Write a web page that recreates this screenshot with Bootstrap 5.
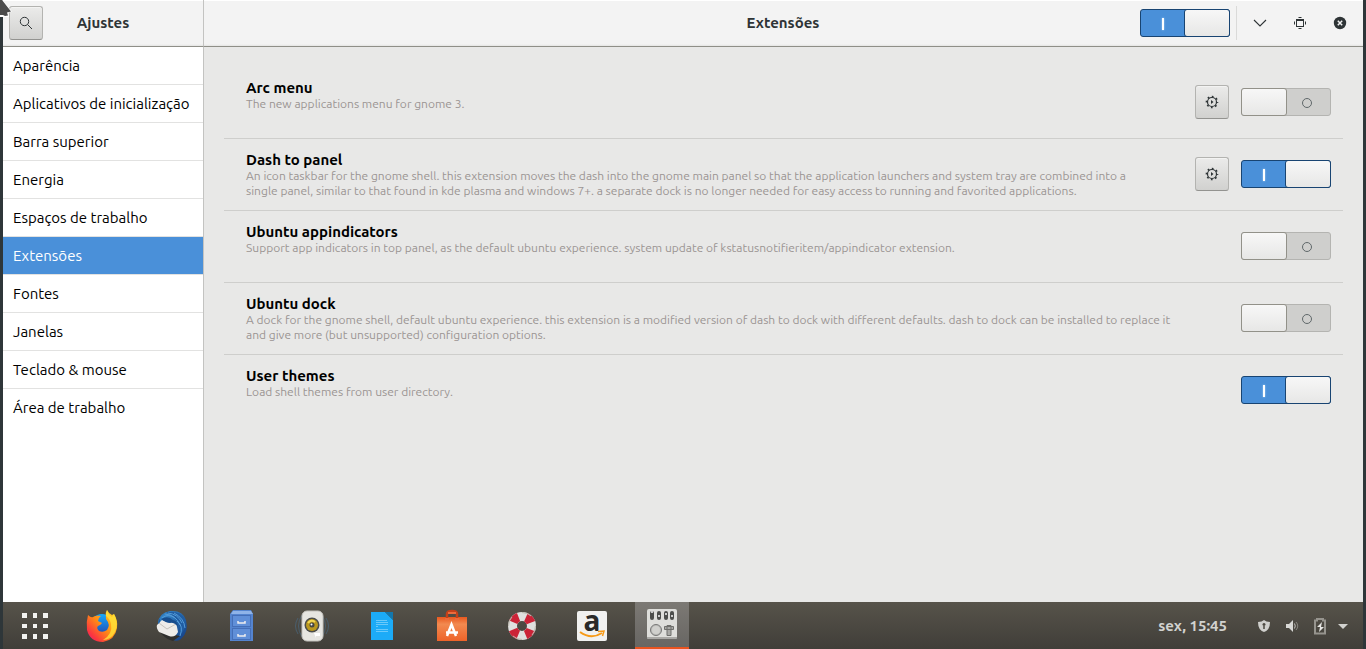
<!DOCTYPE html>
<html lang="pt-BR">
<head>
<meta charset="utf-8">
<meta name="viewport" content="width=device-width, initial-scale=1">
<title>Ajustes</title>
<link href="https://cdn.jsdelivr.net/npm/bootstrap@5.3.0/dist/css/bootstrap.min.css" rel="stylesheet">
<style>
body { font-family: Ubuntu, "Noto Sans", sans-serif; font-size: 15px; line-height: 18px; color: #000; background: #2e3639; }
.app-window { padding: 0 3px; }
.side-width { width: 201px; flex: none; border-right: 1px solid #c3c3c1; }
.title-bar { height: 47px; background: linear-gradient(#fff 1px, #f3f3f3 1px, #f3f3f3 44px, #e4e4e3); border-bottom: 1px solid #8f8f88; color: #2e3436; }
.title-bar.side-width { padding-left: 6px; }
.title-bar h1, .title-bar h2 { font-size: 15px; line-height: 18px; font-weight: 700; margin: 0; }
.title-bar h1 { padding-right: 40px; }
.title-bar h2 { padding-left: 222px; }
.tool-btn { width: 34px; height: 34px; padding: 0; border: 1px solid #b3b3b0; border-bottom-color: #939390; border-radius: 3px; background: linear-gradient(#ebebea, #d1d1cf); color: #2e3436; display: grid; place-items: center; box-shadow: inset 0 1px #f3f3f2; }
.win-btns { gap: 16px; padding: 0 11px; }
.win-btn { width: 24px; height: 34px; padding: 0; border: 0; background: none; color: #2e3436; display: grid; place-items: center; }
.head-sep { width: 1px; height: 34px; background: #dadad9; margin-left: 6px; }
.side-list { background: #fff; }
.side-list .list-group-item { height: 38px; padding: 9px 0 9px 10px; border: 0; border-bottom: 1px solid #e2e2e1; border-radius: 0; color: #000; background: #fff; white-space: nowrap; line-height: 19px; }
.side-list .list-group-item:last-child { border-bottom-color: #fff; }
.side-list .list-group-item.active { background: #4a90d9; color: #fff; margin: 0; border-color: #e2e2e1; }
.page-area { background: #e8e8e7; padding: 20px; }
.ext-row { height: 72px; padding: 12px 12px 0 22px; border-bottom: 1px solid #cececc; }
.ext-row:last-child { border-bottom: 0; }
.ext-row h3 { font-size: 15px; line-height: 17px; font-weight: 700; margin: 0; }
.ext-row p { font-size: 12px; line-height: 15px; color: #9b9593; margin: 0; white-space: nowrap; }
.ext-tools { height: 46px; gap: 12px; }
.toggle { appearance: none; position: relative; width: 90px; height: 28px; margin: 0; border: 1px solid #b4b4b1; border-radius: 3px; background: #cfcfcd; flex: none; display: block; }
.toggle::before { content: ""; position: absolute; left: -1px; top: -1px; width: 46px; height: 28px; border: 1px solid #929189; border-radius: 3px; background: linear-gradient(#f7f7f7, #e7e7e6); }
.toggle::after { content: ""; position: absolute; right: 18px; top: 9px; width: 10px; height: 10px; border: 1px solid #60686a; border-radius: 50%; }
.toggle:checked { border-color: #184472; background: #4a90d9; }
.toggle:checked::before { left: 43px; border-color: #184472; }
.toggle:checked::after { left: 21px; right: auto; top: 8px; width: 2px; height: 12px; border: 0; border-radius: 0; background: #fff; box-shadow: 0 0 2px #b8d8f8; }
.dock { height: 47px; background: linear-gradient(#57534a, #403e39); color: #d2d2cf; }
.dock button { border: 0; background: none; padding: 0; display: grid; place-items: center; height: 47px; color: inherit; }
.apps-btn { width: 64px; }
.dock .task-btn { width: 54px; }
.dock .task-btn.current { background: linear-gradient(#7c7974, #686663); border-bottom: 2px solid #e95420; }
.clock { font-size: 15px; font-weight: 700; }
.dock .tray { gap: 12px; padding: 0 15px 0 29px; }
.corner-pointer { position: absolute; left: 0; top: 0; z-index: 2; }
svg { display: block; overflow: visible; }
</style>
<script src="https://cdn.jsdelivr.net/npm/bootstrap@5.3.0/dist/js/bootstrap.bundle.min.js"></script>
</head>
<body>
<div class="app-window d-flex flex-column min-vh-100">
  <svg class="corner-pointer" width="12" height="20" aria-hidden="true"><path d="M0 -3L12 11.500L8 13L9 17H0Z" fill="#fff"/><path d="M0 -1L2 0L11 11.500L7 12.500L8 15.500L5 16L3 15H0Z" fill="#4b4b4b"/></svg>

  <header class="d-flex">
    <div class="title-bar side-width d-flex align-items-center">
      <button class="tool-btn" type="button" aria-label="Pesquisar">
        <svg width="16" height="16" fill="none" stroke="#2e3436"><circle cx="6.500" cy="6.500" r="4.200"/><path d="M9.500 9.500L14 14"/></svg>
      </button>
      <h1 class="flex-grow-1 text-center">Ajustes</h1>
    </div>
    <div class="title-bar flex-grow-1 d-flex align-items-center">
      <h2 class="flex-grow-1 text-center" id="page-title">Extensões</h2>
      <input class="toggle" type="checkbox" role="switch" checked aria-labelledby="page-title">
      <span class="head-sep"></span>
      <div class="win-btns d-flex">
        <button class="win-btn" type="button" aria-label="Minimizar"><svg width="14" height="14" fill="none" stroke="#2e3436" stroke-width="1.100"><path d="M1 4L7 10L13 4"/></svg></button>
        <button class="win-btn" type="button" aria-label="Maximizar"><svg width="14" height="14" fill="#2e3436"><path d="M3 3h8v8H3zM4 5v5h6v-5z" fill-rule="evenodd"/><path d="M5 2h4L8 1H6zM5 12h4L8 13H6zM2 5v4L1 8V6zM12 5v4L13 8V6z"/></svg></button>
        <button class="win-btn" type="button" aria-label="Fechar"><svg width="14" height="14"><circle cx="7" cy="7" r="6.200" fill="#2e3436"/><path d="M4.800 4.800l4.400 4.400m0-4.400l-4.400 4.400" stroke="#f3f3f3" stroke-width="1.500"/></svg></button>
      </div>
    </div>
  </header>

  <div class="d-flex flex-grow-1">
    <nav class="side-list side-width" aria-label="Seções">
      <div class="list-group">
        <a class="list-group-item" href="#">Aparência</a>
        <a class="list-group-item" href="#">Aplicativos de inicialização</a>
        <a class="list-group-item" href="#">Barra superior</a>
        <a class="list-group-item" href="#">Energia</a>
        <a class="list-group-item" href="#">Espaços de trabalho</a>
        <a class="list-group-item active" href="#" aria-current="page">Extensões</a>
        <a class="list-group-item" href="#">Fontes</a>
        <a class="list-group-item" href="#">Janelas</a>
        <a class="list-group-item" href="#">Teclado &amp; mouse</a>
        <a class="list-group-item" href="#">Área de trabalho</a>
      </div>
    </nav>
    <main class="page-area flex-grow-1">
      <section class="ext-row d-flex justify-content-between">
        <div><h3 id="e1">Arc menu</h3><p>The new applications menu for gnome 3.</p></div>
        <div class="ext-tools d-flex align-items-center">
          <button class="tool-btn" type="button" aria-label="Configurar Arc menu"><svg width="14" height="14"><use href="#gear"/></svg></button>
          <input class="toggle" type="checkbox" role="switch" aria-labelledby="e1">
        </div>
      </section>
      <section class="ext-row d-flex justify-content-between">
        <div><h3 id="e2">Dash to panel</h3><p>An icon taskbar for the gnome shell. this extension moves the dash into the gnome main panel so that the application launchers and system tray are combined into a<br>single panel, similar to that found in kde plasma and windows 7+. a separate dock is no longer needed for easy access to running and favorited applications.</p></div>
        <div class="ext-tools d-flex align-items-center">
          <button class="tool-btn" type="button" aria-label="Configurar Dash to panel"><svg width="14" height="14"><use href="#gear"/></svg></button>
          <input class="toggle" type="checkbox" role="switch" checked aria-labelledby="e2">
        </div>
      </section>
      <section class="ext-row d-flex justify-content-between">
        <div><h3 id="e3">Ubuntu appindicators</h3><p>Support app indicators in top panel, as the default ubuntu experience. system update of kstatusnotifieritem/appindicator extension.</p></div>
        <div class="ext-tools d-flex align-items-center"><input class="toggle" type="checkbox" role="switch" aria-labelledby="e3"></div>
      </section>
      <section class="ext-row d-flex justify-content-between">
        <div><h3 id="e4">Ubuntu dock</h3><p>A dock for the gnome shell, default ubuntu experience. this extension is a modified version of dash to dock with different defaults. dash to dock can be installed to replace it<br>and give more (but unsupported) configuration options.</p></div>
        <div class="ext-tools d-flex align-items-center"><input class="toggle" type="checkbox" role="switch" aria-labelledby="e4"></div>
      </section>
      <section class="ext-row d-flex justify-content-between">
        <div><h3 id="e5">User themes</h3><p>Load shell themes from user directory.</p></div>
        <div class="ext-tools d-flex align-items-center"><input class="toggle" type="checkbox" role="switch" checked aria-labelledby="e5"></div>
      </section>
    </main>
  </div>

  <footer class="dock d-flex align-items-center">
    <button class="apps-btn" type="button" aria-label="Mostrar aplicativos"><svg width="26" height="26" fill="#f2f2f0"><path d="M0 0h5v5H0zM11 0h4v5h-4zM21 0h5v5h-5zM0 11h5v4H0zM11 11h4v4h-4zM21 11h5v4h-5zM0 21h5v5H0zM11 21h4v5h-4zM21 21h5v5h-5z"/></svg></button>
    <div class="d-flex gap-3 ms-2">
      <button class="task-btn" type="button" aria-label="Firefox"><svg width="32" height="32"><circle cx="16" cy="16" r="12" fill="url(#ffb)"/><path d="M2 5Q5 8 7 7Q10 5 15 6Q12 8 12 11L16 13Q15 15 12 16Q10 18 13 21Q17 23 21 20Q25 15 20 9Q19 4 21 0Q23 4 26 5L28 4Q32 10 31 18Q29 30 17 32Q4 32 1 20Q0 12 2 5Z" fill="url(#fff1)"/><path d="M21 0Q22 4 26 7L28 4Q33 14 29 22Q25 30 17 30Q27 24 25 14Q24 9 20 6Q19 3 21 0Z" fill="#ffe13a" opacity=".8"/></svg></button>
      <button class="task-btn" type="button" aria-label="Thunderbird"><svg width="32" height="32"><path d="M2 13Q3 3 14 1Q27 0 30 10Q33 22 25 29Q22 32 17 30Q5 27 2 13Z" fill="url(#tb)"/><path d="M4 22L24 26L17 31Q9 29 4 22Z" fill="#302f2d"/><path d="M1 15L6 10Q12 13 20 12L22 22Q19 28 13 26L3 22Q0 18 1 15Z" fill="#eeece9"/><path d="M3 13L11 19L20 14" fill="none" stroke="#c6c2bc"/><path d="M4 12Q3 4 11 3Q18 5 21 11Q26 16 23 25Q31 20 29 9Q23 0 12 2Q3 5 2 14Z" fill="#205da3"/><path d="M6 8Q12 3 19 8M12 3Q22 4 26 13M18 3Q28 8 29 18M21 11Q28 16 24 26M9 4Q20 5 24 15" fill="none" stroke="#549bd7"/><path d="M5 9Q12 5 17 10Q22 11 22 17Q18 12 14 13Q10 13 5 9Z" fill="#184d8d"/></svg></button>
      <button class="task-btn" type="button" aria-label="Arquivos"><svg width="26" height="32"><path d="M4 0H22L24 4V31H1V4Z" fill="#5484cf"/><path d="M4 1H22L24 4H2Z" fill="#8fb3e8"/><rect x="3.500" y="5.500" width="18" height="11" fill="#608fd8" stroke="#456fb8"/><rect x="3.500" y="18.500" width="18" height="11" fill="#608fd8" stroke="#456fb8"/><path d="M9 11v2h7v-2M9 24v2h7v-2" fill="none" stroke="#eee" stroke-width="1.500"/></svg></button>
      <button class="task-btn" type="button" aria-label="Rhythmbox"><svg width="36" height="32"><path d="M4 8Q-1 16 4 24M8 5Q1 16 8 27M32 8Q37 16 32 24M28 5Q35 16 28 27" fill="none" stroke="#496c88" opacity=".6"/><rect x="8" y="1" width="21" height="30" rx="5" fill="#e6e5e1" stroke="#c4c2bd"/><circle cx="18" cy="15" r="7.500" fill="#4c4d4b"/><circle cx="18" cy="15" r="6" fill="#b9971e"/><path d="M14 13Q17 9 21 12" stroke="#f1d654" stroke-width="2" fill="none"/><circle cx="18" cy="15" r="2.500" fill="#454643"/><circle cx="17.500" cy="14.500" r="1" fill="#fff"/><path d="M20 23h6v3h-4v2" fill="#fff"/></svg></button>
      <button class="task-btn" type="button" aria-label="LibreOffice Writer"><svg width="24" height="30"><path d="M1 1H15L23 9V29H1Z" fill="#1cabf7"/><path d="M15 1H23V9Z" fill="#1277ad"/><path d="M6 9.500h11M6 11.500h12M6 13.500h12M6 15.500h2M6 18.500h12M6 20.500h12" stroke="#8ed5fa" stroke-width=".7"/></svg></button>
      <button class="task-btn" type="button" aria-label="Programas do Ubuntu"><svg width="32" height="32"><path d="M1 7H31V31H1Z" fill="url(#sw)"/><path d="M11 9V4Q11 1 16 1T21 4V9" fill="none" stroke="#c64019" stroke-width="2.500"/><path d="M12 3h8M9 9h4M19 9h4" stroke="#ed6b3c" stroke-width="2"/><path d="M11 26L15.500 14.500L20 26M10 22.500H22" fill="none" stroke="#fff" stroke-width="2.500"/></svg></button>
      <button class="task-btn" type="button" aria-label="Ajuda"><svg width="30" height="30"><circle cx="15" cy="15" r="9.500" fill="none" stroke="#e0e0df" stroke-width="9"/><circle cx="15" cy="15" r="9.500" fill="none" stroke="#cb2337" stroke-width="9" stroke-dasharray="7.460 7.460" transform="rotate(22.500 15 15)"/><circle cx="15" cy="15" r="13.500" fill="none" stroke="#bdb9ae" stroke-width="1" stroke-dasharray="10 11"/></svg></button>
      <button class="task-btn" type="button" aria-label="Amazon"><svg width="30" height="30"><rect width="30" height="30" rx="2" fill="#f1f1f0"/><text x="15" y="20" text-anchor="middle" font-family="Open Sans, sans-serif" font-weight="700" font-size="28" fill="#292929">a</text><path d="M3 21Q14 29 25 22" fill="none" stroke="#f79a17" stroke-width="2"/><path d="M21 20.500l6-.5-1.500 5" fill="none" stroke="#f79a17" stroke-width="1.500"/></svg></button>
      <button class="task-btn current" type="button" aria-label="Ajustes"><svg width="30" height="32"><rect width="30" height="30" rx="2" fill="#dededb"/><path d="M0 28h30v1q0 1-2 1H2q-2 0-2-1z" fill="#aaa9a6"/><g fill="#4d4e4c"><rect x="3" y="2" width="4" height="9" rx="2"/><rect x="10" y="2" width="4" height="9" rx="2"/><rect x="17" y="2" width="4" height="9" rx="2"/><rect x="23" y="2" width="4" height="9" rx="2"/></g><path d="M4 3h2M11 7h2M18 5h2M24 7h2" stroke="#ccc" stroke-width="2"/><circle cx="9" cy="21" r="5.500" fill="#bdbdba" stroke="#777"/><circle cx="9" cy="21" r="4" fill="#d0d0cd"/><path d="M20 16.500h4v10h-4zM17.500 17.500h9v3h-9z" fill="#a9a9a6" stroke="#6f6f6c"/></svg></button>
    </div>
    <span class="clock ms-auto">sex, 15:45</span>
    <button class="tray d-flex align-items-center" type="button" aria-label="Menu do sistema">
      <svg width="16" height="16"><path d="M2 4Q6 4 8 2Q10 4 14 4Q14 12 8 14Q2 12 2 4Z" fill="#d0d0cd"/><path d="M8 5v6M6.500 6.500h3" stroke="#4c4942" stroke-width="1.500"/></svg>
      <svg width="16" height="16"><path d="M2 6h3l4-4v12l-4-4H2z" fill="#d8d8d5"/><path d="M10.500 5.500Q12 8 10.500 10.500" fill="none" stroke="#c2c1be"/><path d="M12 4Q15.500 8 12 12" fill="none" stroke="#88867f"/></svg>
      <svg width="16" height="18"><path d="M3 3.500h2V2h6v1.500h2v13H3z" fill="none" stroke="#96948e" stroke-width="2"/><path d="M10 5L5 10h3l-1 5 5-5H9z" fill="#e6e6e3"/></svg>
      <svg width="8" height="16"><path d="M-2 6h10L3 11z" fill="#d2d2cf"/></svg>
    </button>
  </footer>
</div>

<svg width="0" height="0" class="position-absolute" aria-hidden="true">
  <defs>
    <linearGradient id="ffb" x2="0" y2="1"><stop stop-color="#16aafd"/><stop offset="1" stop-color="#273aa5"/></linearGradient>
    <linearGradient id="fff1" x1="1" y1="0" x2="0" y2="1"><stop stop-color="#ffe226"/><stop offset=".5" stop-color="#ff8a16"/><stop offset=".8" stop-color="#fb3540"/><stop offset="1" stop-color="#e31587"/></linearGradient>
    <linearGradient id="tb" x2="1" y2="1"><stop stop-color="#3994d8"/><stop offset="1" stop-color="#123a80"/></linearGradient>
    <linearGradient id="sw" x2="0" y2="1"><stop stop-color="#e9581e"/><stop offset=".3" stop-color="#f28a50"/><stop offset="1" stop-color="#ee6329"/></linearGradient>
    <g id="gear"><circle cx="7" cy="7" r="4.500" fill="none" stroke="#2e3436" stroke-width="1.200"/><circle cx="7" cy="7" r="5.500" fill="none" stroke="#2e3436" stroke-width="1.600" stroke-dasharray="1.720 2.600" stroke-dashoffset=".860"/><path d="M6 5v4l2.500-2z" fill="#2e3436"/></g>
  </defs>
</svg>
</body>
</html>
